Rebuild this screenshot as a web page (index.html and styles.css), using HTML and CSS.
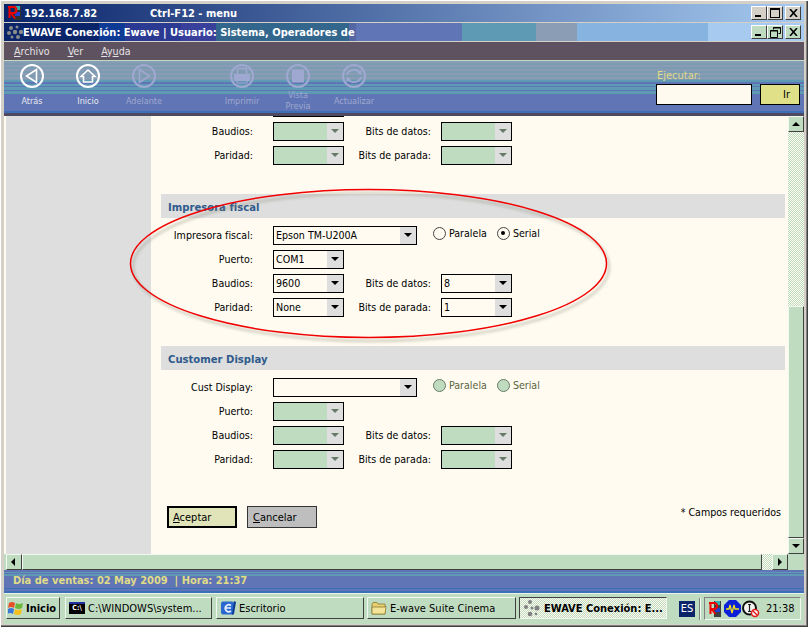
FILE: index.html
```html
<!DOCTYPE html>
<html lang="es">
<head>
  <meta charset="UTF-8">
  <title>EWAVE Conexión</title>
  <link rel="stylesheet" href="styles.css">
</head>
<body>
  <div class="app">

    <!-- remote session title -->
    <div class="title title-remote">
      <svg class="title-icon" width="18" height="16" viewBox="0 0 18 16">
        <rect x="8" y="1" width="7" height="14" fill="#303030"/>
        <rect x="9" y="1" width="5" height="4" fill="#30b0b0"/>
        <rect x="9" y="7" width="5" height="4" fill="#2040d0"/>
        <path d="M2 2h5.500a2.500 2.500 0 0 1 0 6H5l4 5.500M3.500 2v11" fill="none" stroke="#f00000" stroke-width="2"/>
      </svg>
      <span class="title-host">192.168.7.82</span>
      <span class="title-hint">Ctrl-F12 - menu</span>
      <div class="win-btns">
        <span class="win-btn"><i class="g-min"></i></span><span class="win-btn"><i class="g-max"></i></span><span class="win-btn win-close"><svg width="9" height="8" viewBox="0 0 9 8"><path d="M1 0l7 8M8 0l-7 8" stroke="#000" stroke-width="1.600"/></svg></span>
      </div>
    </div>

    <!-- app title -->
    <div class="title title-app">
      <svg class="title-dots" width="18" height="14" viewBox="0 0 18 14">
        <g fill="#8a8a8a"><circle cx="5" cy="3" r="2"/><circle cx="11" cy="2" r="1.500"/><circle cx="3" cy="8" r="2"/><circle cx="9" cy="7" r="2.200"/><circle cx="15" cy="7" r="2.200"/><circle cx="6" cy="12" r="1.500"/><circle cx="12" cy="12" r="2"/></g>
      </svg>
      <span class="title-name">EWAVE Conexión: Ewave | Usuario: Sistema, Operadores de</span>
      <div class="win-btns">
        <span class="win-btn green"><i class="g-min"></i></span><span class="win-btn green"><svg width="11" height="11" viewBox="0 0 11 11"><path d="M3.500 2.500V.500h7v6h-2M.500 3.500h7v7h-7z" fill="none" stroke="#000"/><path d="M3 1h8M0 4h8" stroke="#000"/></svg></span><span class="win-btn win-close green"><svg width="9" height="8" viewBox="0 0 9 8"><path d="M1 0l7 8M8 0l-7 8" stroke="#000" stroke-width="1.600"/></svg></span>
      </div>
    </div>

    <div class="menu">
      <span class="menu-item"><u>A</u>rchivo</span>
      <span class="menu-item"><u>V</u>er</span>
      <span class="menu-item"><u>A</u>y<u>u</u>da</span>
    </div>

    <div class="toolbar">
      <div class="tool">
        <svg width="26" height="26" viewBox="0 0 26 26" fill="none" stroke="#fff" stroke-width="2"><circle cx="13" cy="13" r="11"/><path d="M17.500 6.500v13L7.500 13z" stroke-width="1.600"/></svg>
        <span>Atrás</span>
      </div>
      <div class="tool">
        <svg width="26" height="26" viewBox="0 0 26 26" fill="none" stroke="#fff" stroke-width="2"><circle cx="13" cy="13" r="11"/><path d="M6 13.500L13 7l7 6.500h-2.500V19h-9v-5.500z" stroke-width="1.600"/></svg>
        <span>Inicio</span>
      </div>
      <div class="tool off tool-gap">
        <svg width="26" height="26" viewBox="0 0 26 26" fill="none" stroke="#9fa8d0" stroke-width="2"><circle cx="13" cy="13" r="11"/><path d="M8.500 6.500v13L18.500 13z" stroke-width="1.600"/></svg>
        <span>Adelante</span>
      </div>
      <div class="tool off">
        <svg width="26" height="26" viewBox="0 0 26 26" fill="none" stroke="#9fa8d0" stroke-width="2"><circle cx="13" cy="13" r="11"/><path d="M8.500 11V5.500h9V11" stroke-width="1.500"/><rect x="5" y="11" width="16" height="7" fill="#9fa8d0" stroke="none"/><rect x="8" y="15" width="10" height="5" stroke-width="1.200"/></svg>
        <span>Imprimir</span>
      </div>
      <div class="tool off">
        <svg width="26" height="26" viewBox="0 0 26 26" fill="none" stroke="#9fa8d0" stroke-width="2"><circle cx="13" cy="13" r="11"/><rect x="7" y="6.500" width="12" height="13" fill="#9fa8d0" stroke="none"/></svg>
        <span class="tool-two">Vista<br>Previa</span>
      </div>
      <div class="tool off">
        <svg width="26" height="26" viewBox="0 0 26 26" fill="none" stroke="#9fa8d0" stroke-width="2"><circle cx="13" cy="13" r="11"/><path d="M6 12a7 6 0 0 1 13-2M20 14a7 6 0 0 1-13 2" stroke-width="1.800"/><path d="M21 7l-1 5-4-2zM5 19l1-5 4 2z" fill="#9fa8d0" stroke="none"/></svg>
        <span>Actualizar</span>
      </div>
      <div class="run">
        <span class="run-label">Ejecutar:</span>
        <div class="run-row">
          <span class="run-input"></span>
          <span class="run-go">Ir</span>
        </div>
      </div>
    </div>

    <div class="main">
      <div class="sidebar"></div>
      <div class="content">

        <!-- section scrolled past the top edge -->
        <section class="scrolled">
          <div class="row">
            <span class="lbl"></span>
            <div class="sel off"></div>
          </div>
          <div class="row">
            <label class="lbl">Baudios:</label>
            <div class="sel off"><b class="arrow"></b></div>
            <label class="lbl2">Bits de datos:</label>
            <div class="sel off"><b class="arrow"></b></div>
          </div>
          <div class="row">
            <label class="lbl">Paridad:</label>
            <div class="sel off"><b class="arrow"></b></div>
            <label class="lbl2">Bits de parada:</label>
            <div class="sel off"><b class="arrow"></b></div>
          </div>
        </section>

        <section>
          <h2>Impresora fiscal</h2>
          <div class="row">
            <label class="lbl">Impresora fiscal:</label>
            <div class="sel wide">Epson TM-U200A<b class="arrow"></b></div>
            <span class="radio"><i></i>Paralela</span>
            <span class="radio"><i class="on"></i>Serial</span>
          </div>
          <div class="row">
            <label class="lbl">Puerto:</label>
            <div class="sel">COM1<b class="arrow"></b></div>
          </div>
          <div class="row">
            <label class="lbl">Baudios:</label>
            <div class="sel">9600<b class="arrow"></b></div>
            <label class="lbl2">Bits de datos:</label>
            <div class="sel">8<b class="arrow"></b></div>
          </div>
          <div class="row">
            <label class="lbl">Paridad:</label>
            <div class="sel">None<b class="arrow"></b></div>
            <label class="lbl2">Bits de parada:</label>
            <div class="sel">1<b class="arrow"></b></div>
          </div>
        </section>

        <section>
          <h2>Customer Display</h2>
          <div class="row">
            <label class="lbl">Cust Display:</label>
            <div class="sel wide"><b class="arrow"></b></div>
            <span class="radio off"><i></i>Paralela</span>
            <span class="radio off"><i></i>Serial</span>
          </div>
          <div class="row">
            <label class="lbl">Puerto:</label>
            <div class="sel off"><b class="arrow"></b></div>
          </div>
          <div class="row">
            <label class="lbl">Baudios:</label>
            <div class="sel off"><b class="arrow"></b></div>
            <label class="lbl2">Bits de datos:</label>
            <div class="sel off"><b class="arrow"></b></div>
          </div>
          <div class="row">
            <label class="lbl">Paridad:</label>
            <div class="sel off"><b class="arrow"></b></div>
            <label class="lbl2">Bits de parada:</label>
            <div class="sel off"><b class="arrow"></b></div>
          </div>
        </section>

        <div class="actions">
          <button class="btn btn-ok"><u>A</u>ceptar</button>
          <button class="btn btn-cancel"><u>C</u>ancelar</button>
          <span class="required">* Campos requeridos</span>
        </div>
      </div>

      <div class="vscroll">
        <span class="sb-btn"><b class="tri-up"></b></span>
        <span class="sb-track"></span>
        <span class="sb-thumb"></span>
        <span class="sb-btn"><b class="tri-down"></b></span>
      </div>
    </div>

    <div class="hscroll">
      <span class="sb-btn"><b class="tri-left"></b></span>
      <span class="sb-thumb"></span>
      <span class="sb-track"></span>
      <span class="sb-btn"><b class="tri-right"></b></span>
    </div>

    <div class="status">Día de ventas: 02 May 2009 &nbsp;| Hora: 21:37</div>

    <div class="taskbar">
      <button class="task start">
        <svg width="16" height="16" viewBox="0 0 16 16"><path d="M1 3q3-2 6 0l-1 5q-3-2-6 0z" fill="#e8502a"/><path d="M8 3q3 2 7 0l-1 5q-3 2-7 0z" fill="#6cb83c"/><path d="M0 9q3-2 6 0l-1 5q-3-2-6 0z" fill="#3c78d8"/><path d="M7 9q3 2 7 0l-1 5q-3 2-7 0z" fill="#f4c020"/></svg>
        Inicio
      </button>
      <button class="task t-cmd">
        <span class="cmd-icon">C:\</span>
        <span class="task-text">C:\WINDOWS\system...</span>
      </button>
      <button class="task t-desk">
        <svg width="16" height="16" viewBox="0 0 16 16"><rect x="1" y="1.500" width="13" height="13" rx="2" fill="#2a68d0"/><path d="M14 1l2 1-2 12-2 1z" fill="#0c3a90"/><path d="M11 5.500A3.500 3.500 0 1 0 11 11M5 8h6" fill="none" stroke="#e8f0ff" stroke-width="1.600"/></svg>
        <span class="task-text">Escritorio</span>
      </button>
      <button class="task t-folder">
        <svg width="16" height="16" viewBox="0 0 16 16"><path d="M1 4l1-1.500h4L7 4h7v10H1z" fill="#e8d070" stroke="#8a7a30" stroke-width=".800"/><path d="M1 7h13l1-1v1l-1 7H1z" fill="#f4e498" stroke="#8a7a30" stroke-width=".800"/></svg>
        <span class="task-text">E-wave Suite Cinema</span>
      </button>
      <button class="task t-active">
        <svg width="18" height="18" viewBox="0 0 18 18"><g fill="#808080"><circle cx="7" cy="3" r="2"/><circle cx="3" cy="8" r="2"/><circle cx="9" cy="9" r="1.500"/><circle cx="14" cy="9" r="2.500"/><circle cx="7" cy="15" r="2.300"/><circle cx="13" cy="15" r="1.300"/></g></svg>
        <span class="task-text">EWAVE Conexión: E...</span>
      </button>
      <span class="lang">ES</span>
      <span class="task-sep"></span>
      <div class="tray">
        <svg width="16" height="18" viewBox="0 0 16 18"><rect x="6" y="1" width="7" height="16" fill="#404040"/><rect x="7" y="1" width="5" height="4" fill="#30b0b0"/><rect x="7" y="8" width="5" height="4" fill="#2040d0"/><path d="M1 3h5a2.500 2.500 0 0 1 0 6H3.500l4 5M2.500 3v11" fill="none" stroke="#f00000" stroke-width="2"/></svg>
        <svg width="17" height="17" viewBox="0 0 17 17"><path d="M5 0h7l5 5v7l-5 5H5l-5-5V5z" fill="#0c20d8"/><path d="M2 9h3l1-4 2 8 2-8 1 4h4" fill="none" stroke="#f0e020" stroke-width="1.300"/></svg>
        <svg width="19" height="18" viewBox="0 0 19 18"><circle cx="8.500" cy="8" r="6.500" fill="#f4f4f0" stroke="#101010" stroke-width="2"/><path d="M7 4.500h3M8.500 4.500v7M7 11.500h3" stroke="#202020" stroke-width="1.200"/><circle cx="14" cy="13" r="3.500" fill="#fff" stroke="#e01818" stroke-width="1.500"/><path d="M12 11l4 4" stroke="#e01818" stroke-width="1.400"/></svg>
        <span class="clock">21:38</span>
      </div>
    </div>
  </div>

  <!-- hand drawn marker over the screenshot -->
  <svg class="marker" width="808" height="627" viewBox="0 0 808 627">
    <ellipse class="marker-shadow" cx="371" cy="267" rx="238" ry="74"/>
    <ellipse class="marker-line" cx="368.500" cy="263.500" rx="238" ry="74"/>
  </svg>
</body>
</html>
```

FILE: styles.css
```css
* {
  box-sizing: border-box;
}

html, body {
  margin: 0;
  height: 100%;
}

body {
  position: relative;
  width: 808px;
  height: 627px;
  overflow: hidden;
  padding: 4px 4px 0 4px;
  background-color: #d4d0c8;
  box-shadow: inset 2px 2px 0 -1px #fff, inset -1px -1px 0 #404040, inset -2px -2px 0 #808080;
  font-family: "DejaVu Sans Condensed", "DejaVu Sans", Tahoma, sans-serif;
  font-size: 10.600px;
  color: #000;
}

.app {
  width: 800px;
  display: flex;
  flex-direction: column;
}

/* title bars */
.title {
  height: 18px;
  display: flex;
  align-items: center;
  color: #fff;
  font-weight: bold;
  font-size: 11px;
  position: relative;
}

.title-remote {
  background: linear-gradient(to right, #0a246a, #a6caf0);
  margin-bottom: 1px;
}

.title-icon {
  margin-left: 2px;
}

.title-host {
  width: 126px;
}

.title-app {
  background: linear-gradient(to right,
    #0a246a 0 95px, #0d3a94 95px 121px, #2a3a92 121px 177px, #38409c 177px 212px,
    #33668c 212px 345px, #5566a4 345px 352px, #5f75b5 352px 458px,
    #5f9ab5 458px 532px, #8b9cb5 532px 573px, #87b3e0 573px 704px, #a6caf0 704px);
}

.title-dots {
  margin-left: 2px;
  margin-right: -1px;
}

.win-btns {
  position: absolute;
  right: 3px;
  top: 2px;
  display: flex;
}

.win-btn {
  width: 16px;
  height: 14px;
  background-color: #d4d0c8;
  border: 1px solid;
  border-color: #fff #404040 #404040 #fff;
  display: flex;
  align-items: center;
  justify-content: center;
  position: relative;
}

.win-btn.green {
  background-color: #c0dcc0;
}

.win-close {
  margin-left: 2px;
}

.g-min {
  position: absolute;
  left: 3px;
  bottom: 2px;
  width: 6px;
  height: 2px;
  background-color: #000;
}

.g-max {
  width: 10px;
  height: 10px;
  border: 1px solid #000;
  border-top-width: 2px;
}

/* menu */
.menu {
  margin-top: 1px;
  height: 18px;
  background-color: #5f5260;
  color: #e4e4e4;
  display: flex;
  align-items: center;
  padding-left: 10px;
}

.menu-item {
  margin-right: 18px;
}

/* toolbar */
.toolbar {
  height: 56px;
  display: flex;
  position: relative;
  border-top: 1px solid #c0dcc0;
  background-image:
    linear-gradient(to bottom, transparent 50px, #3c6fb8 50px 52px, #504a60 52px),
    linear-gradient(to bottom, transparent 35px, #5f75b5 35px),
    linear-gradient(to bottom, transparent 19px, #5f9ab5 19px 21px, #5f75b5 21px 23px, #5f9ab5 23px 25px, #5f75b5 25px 26px, #5f9ab5 26px 29px, #5f75b5 29px 30px, #5f9ab5 30px 33px, #5f75b5 33px),
    repeating-linear-gradient(to bottom, #8a9bb5 0 2px, #7b9bb0 2px 4px);
}

.tool {
  width: 56px;
  display: flex;
  flex-direction: column;
  align-items: center;
  padding-top: 2px;
  color: #e8e8f0;
  font-size: 9px;
  line-height: 11px;
}

.tool svg {
  display: block;
}

.tool span {
  margin-top: 7px;
}

.tool .tool-two {
  margin-top: 1px;
  text-align: center;
}

.tool.off {
  color: #9fa8d0;
}

.tool-gap {
  margin-right: 42px;
}

.run {
  position: absolute;
  left: 652px;
  top: 8px;
  color: #e0dc88;
  font-size: 11px;
}

.run-label {
  display: block;
  margin-left: 1px;
  height: 15px;
  line-height: 14px;
}

.run-row {
  display: flex;
  gap: 8px;
}

.run-input {
  width: 96px;
  height: 21px;
  background-color: #fffaf0;
  border: 1px solid #000;
}

.run-go {
  width: 40px;
  height: 21px;
  background-color: #e0e088;
  border: 1px solid #000;
  color: #000;
  line-height: 19px;
  text-align: right;
  padding-right: 9px;
}

/* content */
.main {
  height: 438px;
  display: flex;
  background-color: #fffbf0;
  padding-left: 2px;
}

.sidebar {
  width: 145px;
  background-color: #dedede;
}

.content {
  width: 637px;
  overflow: hidden;
  position: relative;
}

section {
  margin: 0 3px 0 10px;
  padding-bottom: 24px;
}

.scrolled {
  margin-top: -18px;
}

h2 {
  margin: 0 0 8px;
  height: 24px;
  padding-left: 7px;
  background-color: #dedede;
  color: #2f5a8c;
  font-size: 11.200px;
  line-height: 27px;
}

.row {
  height: 19px;
  margin-bottom: 5px;
  display: flex;
  align-items: center;
}

.lbl {
  width: 92px;
  margin-right: 20px;
  margin-top: -2px;
  text-align: right;
}

.lbl2 {
  width: 87px;
  margin-right: 10px;
  margin-top: -2px;
  text-align: right;
}

.sel {
  width: 71px;
  height: 19px;
  padding-left: 2px;
  border: 1px solid #000;
  background-color: #fffbf0;
  line-height: 17px;
  position: relative;
}

.sel.wide {
  width: 144px;
}

.sel.off {
  background-color: #c0dcc0;
}

.arrow {
  position: absolute;
  right: 0;
  top: 0;
  bottom: 0;
  width: 16px;
  background-color: #dedede;
}

.arrow::after {
  content: "";
  position: absolute;
  left: 4px;
  top: 6px;
  border: 4px solid transparent;
  border-bottom: 0;
  border-top: 4px solid #000;
}

.sel.off .arrow::after {
  border-top-color: #667a66;
}

.radio {
  display: flex;
  align-items: center;
  margin-left: 16px;
  margin-top: -5px;
}

.radio + .radio {
  margin-left: 10px;
}

.radio i {
  width: 13px;
  height: 13px;
  margin-right: 3px;
  border: 1px solid #444;
  border-radius: 50%;
  background-color: #fffbf0;
  position: relative;
}

.radio i.on::after {
  content: "";
  position: absolute;
  left: 3.500px;
  top: 3.500px;
  width: 4px;
  height: 4px;
  border-radius: 50%;
  background-color: #000;
}

.radio.off {
  color: #5a6440;
}

.radio.off i {
  background-color: #c0dcc0;
  border-color: #6a7a66;
}

.actions {
  margin-top: 8px;
  padding-left: 16px;
  display: flex;
  gap: 10px;
  position: relative;
}

.btn {
  width: 70px;
  height: 22px;
  padding: 0 0 0 5px;
  text-align: left;
  font: inherit;
  font-size: 11px;
  color: #000;
}

.btn-ok {
  background-color: #e0e4b8;
  border: 2px solid #000;
  padding-left: 4px;
}

.btn-cancel {
  background-color: #bebebe;
  border: 1px solid #333;
}

.required {
  position: absolute;
  right: 7px;
  top: 0;
}

/* scrollbars */
.vscroll {
  width: 16px;
  display: flex;
  flex-direction: column;
}

.hscroll {
  height: 16px;
  display: flex;
  padding: 0 16px 0 2px;
  background-color: #c0dcc0;
}

.sb-btn {
  flex: none;
  width: 16px;
  height: 16px;
  background-color: #c0dcc0;
  border: 1px solid;
  border-color: #f0f8f0 #404040 #404040 #f0f8f0;
  position: relative;
}

.sb-btn b {
  position: absolute;
  border: 4px solid transparent;
}

.tri-up {
  left: 3px;
  top: 1px;
  border-bottom-color: #000 !important;
}

.tri-down {
  left: 3px;
  top: 5px;
  border-top-color: #000 !important;
}

.tri-left {
  left: 0;
  top: 3px;
  border-right-color: #000 !important;
}

.tri-right {
  left: 5px;
  top: 3px;
  border-left-color: #000 !important;
}

.sb-track {
  background-color: #fffbf0;
  background-image: repeating-conic-gradient(#c0dcc0 0 25%, #fffbf0 0 50%);
  background-size: 2px 2px;
}

.vscroll .sb-track {
  height: 174px;
}

.hscroll .sb-track {
  width: 10px;
}

.sb-thumb {
  background-color: #c0dcc0;
  border: 1px solid;
  border-color: #f0f8f0 #404040 #404040 #f0f8f0;
}

.vscroll .sb-thumb {
  height: 232px;
}

.hscroll .sb-thumb {
  width: 740px;
}

/* status */
.status {
  height: 23px;
  padding-left: 9px;
  color: #e0dc88;
  font-weight: bold;
  font-size: 11px;
  line-height: 22px;
  background: linear-gradient(to bottom,
    #5f75b5 0 2px, #5f9ab5 2px 3px, #5f75b5 3px 4px, #5f9ab5 4px 6px, #5f75b5 6px 18px,
    #3c6fb8 18px 19px, #5f75b5 19px 21px, #3c6fb8 21px);
}

/* taskbar */
.taskbar {
  height: 31px;
  background-color: #c0dcc0;
  border-top: 1px solid #e8f4e8;
  display: flex;
  align-items: flex-start;
  padding: 3px 0 0 2px;
  position: relative;
}

.task {
  height: 22px;
  padding: 0 0 0 3px;
  display: flex;
  align-items: center;
  gap: 3px;
  background-color: #c0dcc0;
  border: 1px solid;
  border-color: #f0f8f0 #404040 #404040 #f0f8f0;
  font: inherit;
  font-size: 11px;
  color: #000;
  white-space: nowrap;
  overflow: hidden;
}

.start {
  width: 54px;
  padding-left: 1px;
  gap: 2px;
  font-weight: bold;
  margin-right: 5px;
}

.t-cmd {
  width: 147px;
  margin-right: 4px;
}

.t-desk {
  width: 148px;
  margin-right: 3px;
}

.t-folder {
  width: 149px;
  margin-right: 3px;
}

.t-active {
  width: 148px;
  font-weight: bold;
  border-color: #404040 #f0f8f0 #f0f8f0 #404040;
  background-color: #e4f0e4;
  background-image: repeating-conic-gradient(#c0dcc0 0 25%, #fffbf0 0 50%);
  background-size: 2px 2px;
}

.cmd-icon {
  width: 16px;
  height: 12px;
  background-color: #000;
  border-top: 2px solid #2030a0;
  color: #fff;
  font-size: 7px;
  line-height: 9px;
  font-weight: bold;
  text-align: center;
}

.lang {
  margin: 4px 0 0 12px;
  width: 16px;
  height: 16px;
  background-color: #0a246a;
  color: #fff;
  font-size: 11px;
  line-height: 16px;
  text-align: center;
}

.task-sep {
  margin: 1px 0 0 4px;
  height: 22px;
  width: 2px;
  border-left: 1px solid #808080;
  border-right: 1px solid #f0f8f0;
}

.tray {
  margin-left: 3px;
  width: 97px;
  height: 23px;
  display: flex;
  align-items: center;
  padding-left: 3px;
  border: 1px solid;
  border-color: #808080 #f0f8f0 #f0f8f0 #808080;
}

.clock {
  margin-left: 6px;
  font-size: 11px;
}

/* red marker */
.marker {
  position: absolute;
  left: 0;
  top: 0;
  pointer-events: none;
}

.marker ellipse {
  fill: none;
}

.marker-shadow {
  stroke: #808070;
  stroke-width: 2px;
  opacity: .45;
  filter: blur(1.500px);
}

.marker-line {
  stroke: #f00000;
  stroke-width: 1.500px;
}
```
